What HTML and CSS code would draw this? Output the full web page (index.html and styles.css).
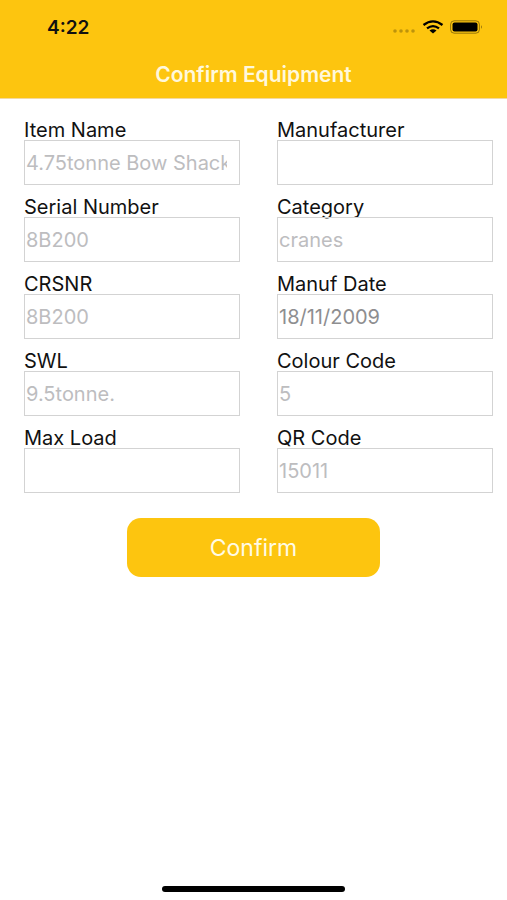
FILE: index.html
```html
<!DOCTYPE html>
<html lang="en">
<head>
<meta charset="utf-8">
<meta name="viewport" content="width=device-width, initial-scale=1">
<title>Confirm Equipment</title>
<link rel="stylesheet" href="styles.css">
</head>
<body>
<header class="header">
  <div class="status">
    <span class="time">4:22</span>
    <div class="indicators">
      <svg class="signal" width="24" height="6" viewBox="0 0 24 6" aria-hidden="true">
        <g fill="#000" fill-opacity=".25"><circle cx="3" cy="3" r="1.800"/><circle cx="9" cy="3" r="1.800"/><circle cx="15" cy="3" r="1.800"/><circle cx="21" cy="3" r="1.800"/></g>
      </svg>
      <svg class="wifi" width="22" height="14" viewBox="0 0 22 14" aria-hidden="true">
        <g fill="none" stroke="#000" stroke-width="2.300"><path d="M1.500 5Q11-2.200 20.500 5"/><path d="M5 8.400Q11 3.800 17 8.400"/></g>
        <path d="M7.500 10.600Q11 8 14.500 10.600L11 13.500Z"/>
      </svg>
      <svg class="battery" width="33" height="14" viewBox="0 0 33 14" aria-hidden="true">
        <rect x=".6" y=".8" width="28.800" height="12.400" rx="3.600" fill="none" stroke="#000" stroke-opacity=".4"/>
        <rect x="2.500" y="2.500" width="25" height="9" rx="2"/>
        <path d="M31 5Q32.800 7 31 9Z" fill-opacity=".5"/>
      </svg>
    </div>
  </div>
  <h1 class="title">Confirm Equipment</h1>
</header>
<main class="content">
  <form class="form">
    <div class="fields">
      <div class="field"><label for="item">Item Name</label><input id="item" type="text" placeholder="4.75tonne Bow Shackle"></div>
      <div class="field"><label for="manufacturer">Manufacturer</label><input id="manufacturer" type="text"></div>
      <div class="field"><label for="serial">Serial Number</label><input id="serial" type="text" placeholder="8B200"></div>
      <div class="field"><label for="category">Category</label><input id="category" type="text" placeholder="cranes"></div>
      <div class="field"><label for="crsnr">CRSNR</label><input id="crsnr" type="text" placeholder="8B200"></div>
      <div class="field"><label for="date">Manuf Date</label><input id="date" type="text" value="18/11/2009"></div>
      <div class="field"><label for="swl">SWL</label><input id="swl" type="text" placeholder="9.5tonne."></div>
      <div class="field"><label for="colour">Colour Code</label><input id="colour" type="text" placeholder="5"></div>
      <div class="field"><label for="load">Max Load</label><input id="load" type="text"></div>
      <div class="field"><label for="qr">QR Code</label><input id="qr" type="text" placeholder="15011"></div>
    </div>
    <button class="confirm" type="button">Confirm</button>
  </form>
</main>
<footer class="footer"><div class="home-bar"></div></footer>
</body>
</html>
```
FILE: styles.css
```css
* { box-sizing: border-box; }
body {
  margin: 0;
  min-height: 100vh;
  display: flex;
  flex-direction: column;
  background: #fff;
  color: #111;
  font-family: Inter, "Liberation Sans", sans-serif;
  font-size: 20px;
}
.header {
  background: #fdc50f;
  border-bottom: 1px solid #f3d9a0;
}
.status {
  display: flex;
  justify-content: space-between;
  align-items: center;
  height: 54px;
  padding: 0 24px 0 47px;
}
.time {
  font-size: 19px;
  font-weight: 600;
}
.indicators {
  display: flex;
  align-items: center;
  gap: 6px;
}
.signal { margin-top: 8px; }
.title {
  margin: 0;
  padding: 5px 0 7px;
  color: #fff8dc;
  font-size: 21px;
  font-weight: 600;
  line-height: 32px;
  text-align: center;
}
.content {
  flex: 1;
  padding-top: 21px;
}
.form {
  display: flex;
  flex-direction: column;
  align-items: center;
  gap: 25px;
}
.fields {
  width: 100%;
  padding: 0 14px 0 24px;
  display: grid;
  grid-template-columns: 1fr 1fr;
  gap: 12px 37px;
}
.field {
  display: flex;
  flex-direction: column;
  min-width: 0;
}
.field label {
  line-height: 20px;
  white-space: nowrap;
}
.field input {
  width: 100%;
  height: 45px;
  padding: 0 12px 0 1px;
  border: 1px solid #d3d3d3;
  border-radius: 0;
  background: transparent;
  color: #8e8e90;
  font: inherit;
}
.field input::placeholder {
  color: #bdbdbf;
  opacity: 1;
}
.confirm {
  width: 50%;
  height: 59px;
  border: 0;
  border-radius: 14px;
  background: #fdc50f;
  color: #fffbe6;
  font: inherit;
  font-size: 23px;
}
.footer {
  display: flex;
  justify-content: center;
  padding: 16px 0 8px;
}
.home-bar {
  width: 36%;
  height: 6px;
  border-radius: 3px;
  background: #000;
}
```
